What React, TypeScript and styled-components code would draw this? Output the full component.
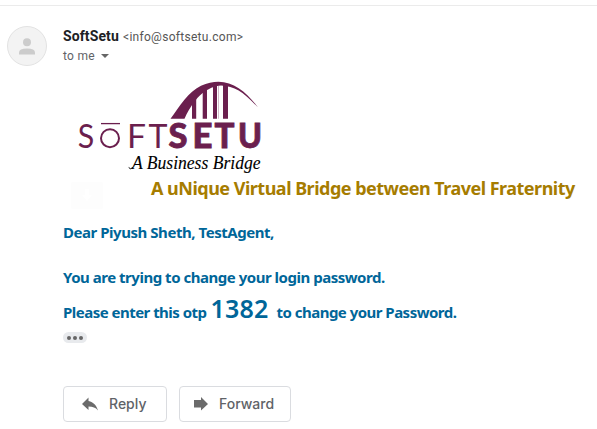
import React from "react";
import styled, { createGlobalStyle } from "styled-components";

const GlobalStyle = createGlobalStyle`
  body { margin: 0; background: #fff; }
`;

const Message = styled.article`
  box-sizing: border-box;
  width: 597px;
  height: 429px;
  padding: 5px 0 0 7px;
  overflow: hidden;
  background: #fff;
  font-family: Roboto, sans-serif;
`;

const Divider = styled.div`
  height: 1px;
  margin-left: -7px;
  background: #ebebeb;
`;

const Header = styled.header`
  display: flex;
  gap: 16px;
  height: 60px;
  padding-top: 20px;
  box-sizing: border-box;
`;

const Avatar = styled.svg`
  flex: none;
  width: 40px;
  height: 40px;
`;

const Sender = styled.div`
  white-space: nowrap;
`;

const SenderLine = styled.div`
  display: flex;
  align-items: baseline;
  height: 20px;
  line-height: 20px;
`;

const Name = styled.span`
  width: 60px;
  font-size: 14px;
  font-weight: 700;
  letter-spacing: 0.1px;
  color: #202124;
`;

const Address = styled.span`
  font-size: 12px;
  letter-spacing: 0.29px;
  color: #555;
`;

const Recipient = styled.div`
  display: flex;
  align-items: center;
  gap: 6px;
  height: 20px;
  line-height: 20px;
  font-size: 12px;
  letter-spacing: 0.3px;
  color: #5f6368;
`;

const Caret = styled.i`
  border: 4px solid transparent;
  border-top-color: #666;
  border-bottom: 0;
`;

const Body = styled.main`
  display: flex;
  flex-direction: column;
  align-items: flex-start;
  padding: 10px 0 0 56px;
  font-family: "Noto Sans", "Open Sans", sans-serif;
  font-weight: 700;
  white-space: nowrap;
`;

const Logo = styled.svg`
  width: 210px;
  height: 100px;
`;

const TaglineRow = styled.div`
  display: flex;
  align-items: flex-start;
  height: 33px;
  padding-left: 8px;
`;

const GhostTile = styled.svg`
  width: 32px;
  height: 27px;
  margin-top: 6px;
`;

const Tagline = styled.h2`
  margin: 0 0 0 48px;
  font-size: 18px;
  font-weight: 700;
  line-height: 24px;
  letter-spacing: -0.51px;
  color: #a67c00;
`;

const Line = styled.p<{ $top: number; $spacing: number }>`
  display: flex;
  align-items: baseline;
  height: 24px;
  margin: ${(p) => p.$top}px 0 0;
  font-size: 15px;
  font-weight: 700;
  line-height: 24px;
  letter-spacing: ${(p) => p.$spacing}px;
  color: #006699;
`;

const Code = styled.strong`
  width: 66px;
  margin-left: 4px;
  font-size: 25px;
  font-weight: 600;
  letter-spacing: 0.2px;
`;

const Trimmed = styled.button`
  display: flex;
  align-items: center;
  justify-content: center;
  gap: 2px;
  width: 24px;
  height: 11px;
  margin: 12px 0 0;
  padding: 0;
  border: 0;
  border-radius: 6px;
  background: #e8eaed;
`;

const Dot = styled.i`
  width: 4px;
  height: 4px;
  border-radius: 50%;
  background: #666;
`;

const Actions = styled.footer`
  display: flex;
  gap: 12px;
  margin-top: 43px;
`;

const ActionButton = styled.button<{ $width: number }>`
  display: flex;
  align-items: center;
  box-sizing: border-box;
  width: ${(p) => p.$width}px;
  height: 36px;
  padding: 0 0 0 14px;
  border: 1px solid #dadce0;
  border-radius: 4px;
  background: #fff;
  color: #5f6368;
`;

const ActionIcon = styled.svg`
  flex: none;
  width: 20px;
  height: 18px;
  fill: #6b6b6b;
`;

const ActionLabel = styled.span<{ $gap: number }>`
  margin-left: ${(p) => p.$gap}px;
  font: 500 14px/20px "Inter", Roboto, sans-serif;
  letter-spacing: 0;
`;

const plum = "#6b1f4e";

function SoftSetuLogo() {
  return (
    <Logo viewBox="63 75 210 100" role="img" aria-label="SoftSetu, A Business Bridge">
      <g fill={plum}>
        <path d="M170.500 117.800C180 105 188 91 201 84.800C225 74 243 86 258 106.500C244 91.500 235 85 221 84.500C208 86 196 93 184.500 117.800Z" />
        <path d="M192 97L196.200 92V117.800H192ZM202.700 88H207V117.800H202.700ZM213 84H217V117.800H213ZM223 83.500H228V117.800H223Z" />
        <path d="M218 84.500H219V117.800H218Z" opacity="0.300" />
      </g>
      <g fill={plum} fontFamily="Lato, sans-serif" fontSize="33.500" fontWeight="400">
        <text x="77.700" y="147" textLength="16.500" lengthAdjust="spacingAndGlyphs">S</text>
        <text x="127" y="147" textLength="19" lengthAdjust="spacingAndGlyphs">F</text>
        <text x="148.500" y="147" textLength="19" lengthAdjust="spacingAndGlyphs">T</text>
        <g fontWeight="900" stroke={plum} strokeWidth="0.800">
          <text x="168.500" y="146.700" textLength="19" lengthAdjust="spacingAndGlyphs">S</text>
          <text x="192.500" y="146.700" textLength="20" lengthAdjust="spacingAndGlyphs">E</text>
          <text x="214.500" y="146.700" textLength="20" lengthAdjust="spacingAndGlyphs">T</text>
          <text x="238" y="146.700" textLength="24" lengthAdjust="spacingAndGlyphs">U</text>
        </g>
      </g>
      <g fill="none" stroke={plum}>
        <circle cx="110" cy="137.200" r="9" strokeWidth="2" />
        <path d="M101 122.600H120" strokeWidth="1.300" />
      </g>
      <text x="132" y="167.500" textLength="128.500" lengthAdjust="spacingAndGlyphs" fontFamily="'Liberation Serif', serif" fontStyle="italic" fontWeight="400" fontSize="18" fill="#000" stroke="#000" strokeWidth="0.100">A Business Bridge</text>
      <path d="M133 166.500Q130 169 128.700 166.500" fill="none" stroke="#000" strokeWidth="1" />
    </Logo>
  );
}

export default function App() {
  return (
    <>
      <GlobalStyle />
      <Message>
        <Divider />
        <Header>
          <Avatar viewBox="0 0 40 40">
            <circle cx="20" cy="20" r="19.500" fill="#f3f3f3" stroke="#e2e2e2" />
            <circle cx="20" cy="16.300" r="4" fill="#ccc" />
            <path d="M12 28.500V26.500Q12 22.500 20 22.500T28 26.500V28.500Z" fill="#ccc" />
          </Avatar>
          <Sender>
            <SenderLine>
              <Name>SoftSetu</Name>
              <Address>&lt;info@softsetu.com&gt;</Address>
            </SenderLine>
            <Recipient>to me <Caret /></Recipient>
          </Sender>
        </Header>
        <Body>
          <SoftSetuLogo />
          <TaglineRow>
            <GhostTile viewBox="0 0 32 27">
              <rect width="32" height="27" rx="2" fill="#fdfdfd" />
              <path d="M14 7H18V13H21L16 19L11 13H14Z" fill="#fff" />
            </GhostTile>
            <Tagline>A uNique Virtual Bridge between Travel Fraternity</Tagline>
          </TaglineRow>
          <Line $top={11} $spacing={-0.46}>Dear Piyush Sheth, TestAgent,</Line>
          <Line $top={21} $spacing={-0.48}>You are trying to change your login password.</Line>
          <Line $top={7} $spacing={-0.52}>
            Please enter this otp <Code>1382</Code> to change your Password.
          </Line>
          <Trimmed aria-label="Show trimmed content"><Dot /><Dot /><Dot /></Trimmed>
          <Actions>
            <ActionButton $width={104}>
              <ActionIcon viewBox="0 0 20 18"><path d="M10.500 6V2.500L4 9L10.500 15V11.500C15 11.500 17.500 12.500 20 15.500C18.500 10.500 15.500 7 10.500 6Z" /></ActionIcon>
              <ActionLabel $gap={11}>Reply</ActionLabel>
            </ActionButton>
            <ActionButton $width={112}>
              <ActionIcon viewBox="0 0 20 18"><path d="M0 5H7V2L14 9L7 15.500V12.500H0Z" /></ActionIcon>
              <ActionLabel $gap={5}>Forward</ActionLabel>
            </ActionButton>
          </Actions>
        </Body>
      </Message>
    </>
  );
}
